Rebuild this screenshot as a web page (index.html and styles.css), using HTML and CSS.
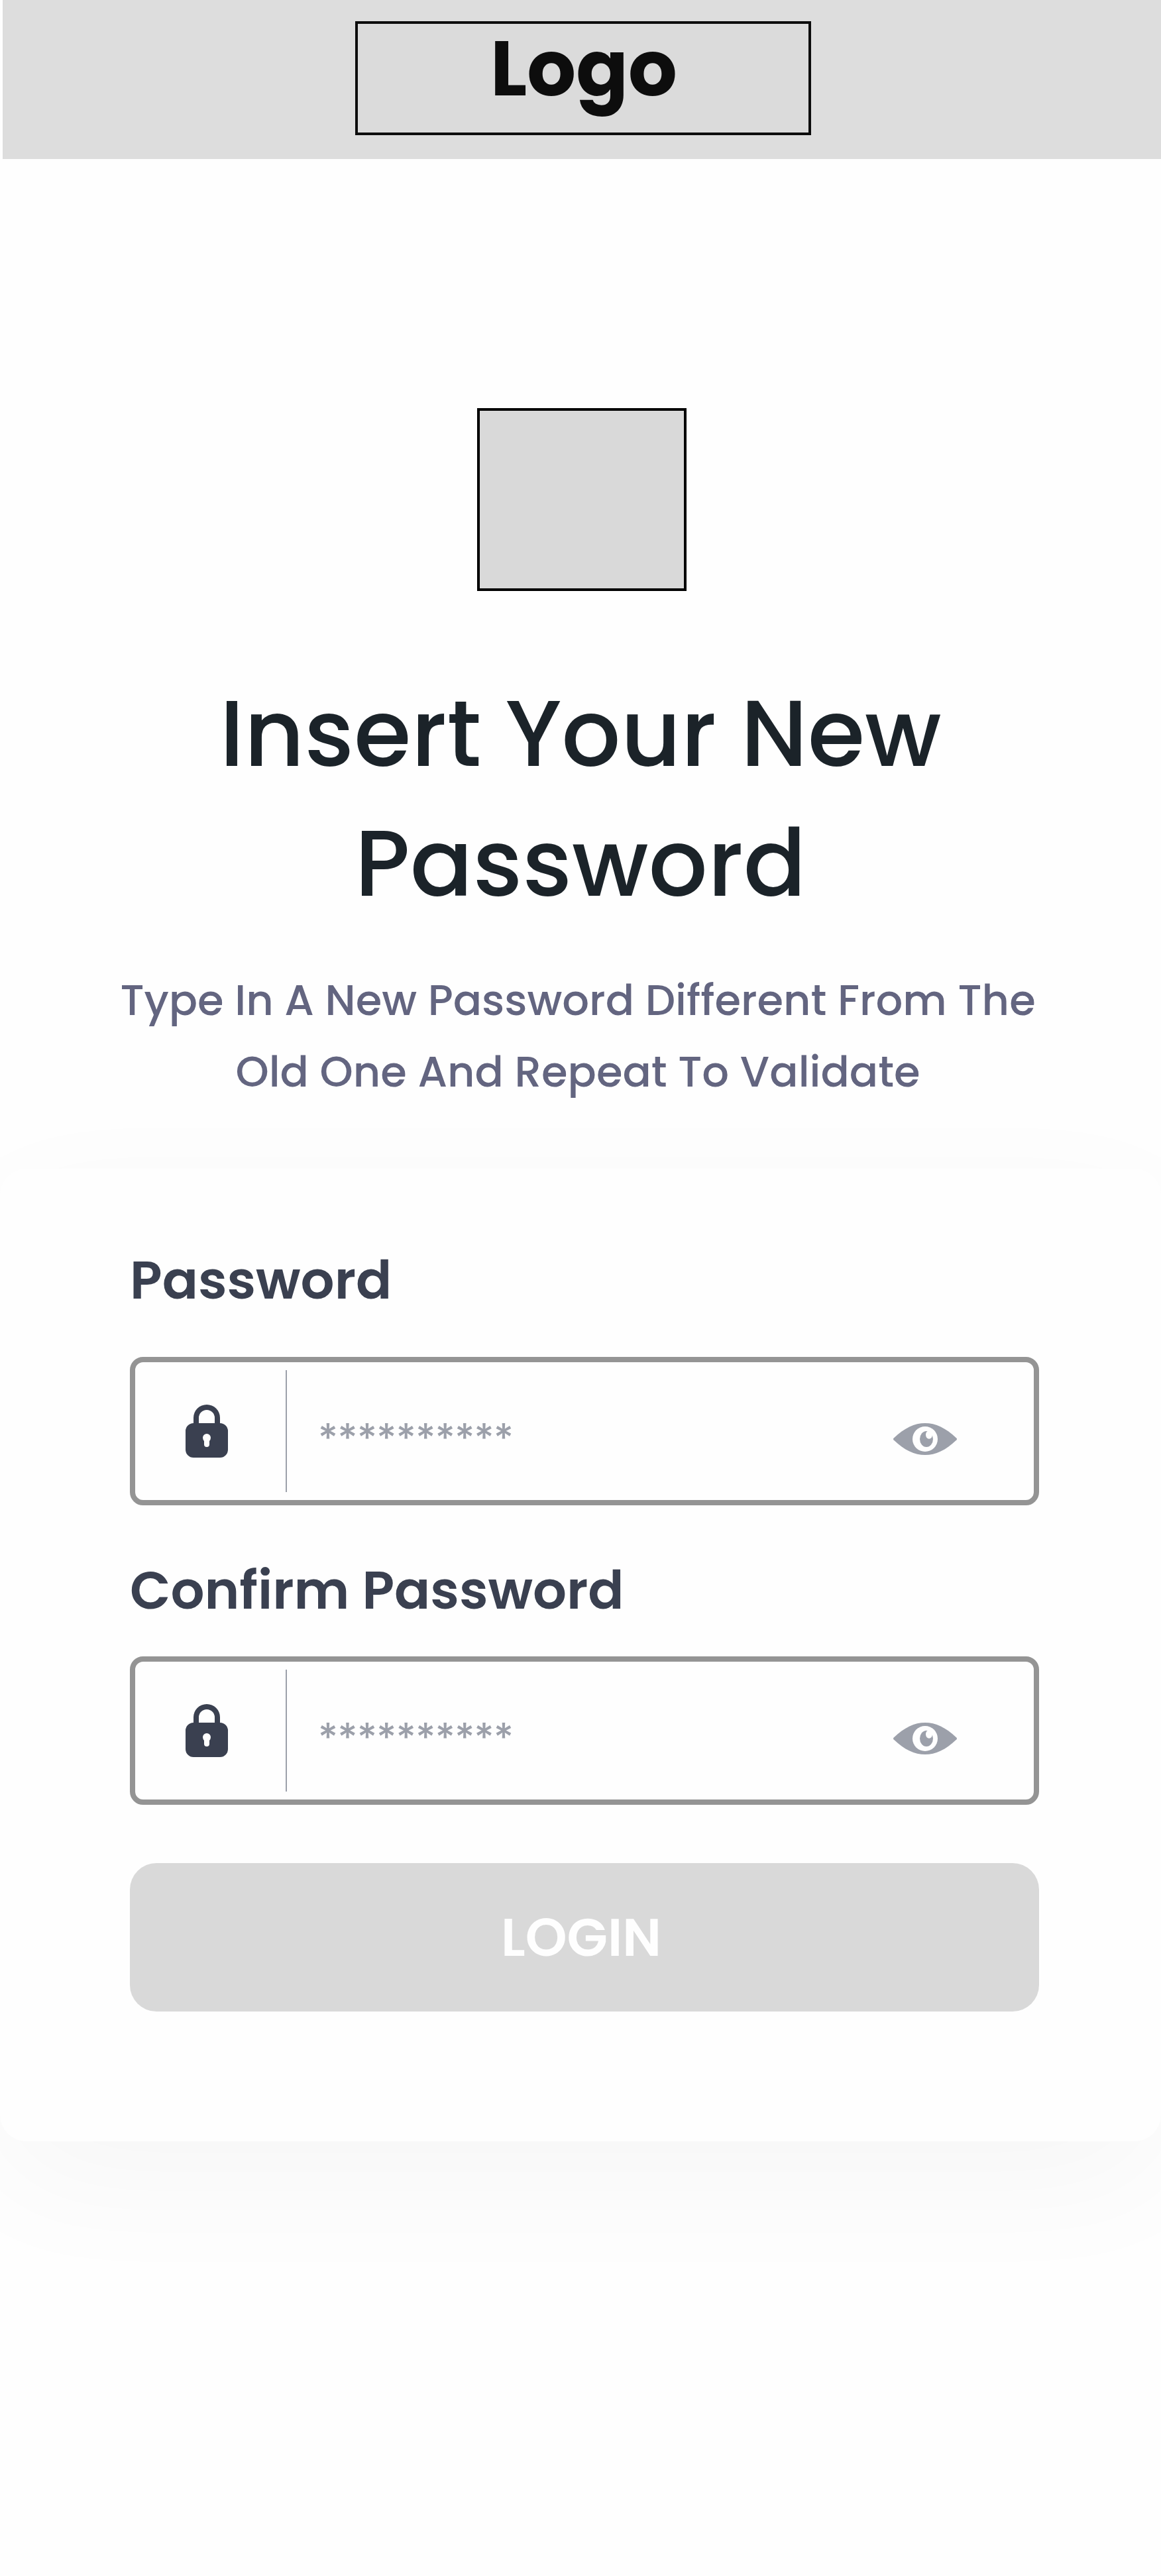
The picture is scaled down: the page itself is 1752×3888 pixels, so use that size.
FILE: index.html
```
<!DOCTYPE html>
<html lang="en">
<head>
<meta charset="utf-8">
<title>Insert Your New Password</title>
<link rel="stylesheet" href="styles.css">
</head>
<body>
<svg class="sprite" aria-hidden="true">
  <symbol id="lock" viewBox="0 0 64 80">
    <path fill-rule="evenodd" d="M12 28V20a20 20 0 0 1 40 0v8a12 12 0 0 1 12 12v28a12 12 0 0 1-12 12H12a12 12 0 0 1-12-12V40a12 12 0 0 1 12-12zm8 0h24v-8a12 12 0 0 0-24 0zm8 27v5a4 4 0 0 0 8 0v-5q2-2.500 2-5a6 6 0 0 0-12 0q0 2.500 2 5z"/>
  </symbol>
  <symbol id="eye" viewBox="0 0 96 48">
    <path d="M0.500 22.800C17 7 32 0 48 0S79 7 95.500 22.800Q96.500 24 95.500 25.200C79 41 64 48 48 48S17 41 0.500 25.200Q-0.500 24 0.500 22.800z"/>
    <circle class="eye-light" cx="48" cy="24" r="19"/>
    <ellipse cx="50" cy="24" rx="10" ry="12"/>
    <ellipse class="eye-light" cx="54" cy="17.500" rx="5" ry="6.200"/>
  </symbol>
</svg>
<header class="topbar">
  <div class="logo">Logo</div>
</header>
<main>
  <section class="intro">
    <div class="picture"></div>
    <h1 class="title">Insert Your New<br>Password</h1>
    <p class="subtitle">Type In A New Password Different From The<br>Old One And Repeat To Validate</p>
  </section>
  <form class="card">
    <div class="label">Password</div>
    <div class="field">
      <svg class="lock"><use href="#lock"/></svg>
      <span class="divider"></span>
      <span class="stars">**********</span>
      <svg class="eye"><use href="#eye"/></svg>
    </div>
    <div class="label label-confirm">Confirm Password</div>
    <div class="field">
      <svg class="lock"><use href="#lock"/></svg>
      <span class="divider"></span>
      <span class="stars">**********</span>
      <svg class="eye"><use href="#eye"/></svg>
    </div>
    <button class="submit" type="button">LOGIN</button>
  </form>
</main>
</body>
</html>
```
FILE: styles.css
```
* {
  box-sizing: border-box;
}

body {
  margin: 0;
  min-height: 3888px;
  background: #fefefe;
  font-family: Poppins, Inter, "Liberation Sans", sans-serif;
}

.sprite {
  display: none;
}

.topbar {
  display: flex;
  height: 240px;
  margin-left: 4px;
  padding: 32px 0 0 532px;
  background: #ddd;
}

.logo {
  width: 688px;
  height: 172px;
  padding-left: 200px;
  border: 4px solid #0d0d0d;
  background: #dbdbdb;
  color: #0d0d0d;
  font-size: 116px;
  font-weight: 700;
  line-height: 135px;
}

.intro {
  display: flex;
  flex-direction: column;
  padding-top: 376px;
}

.picture {
  width: 316px;
  height: 276px;
  margin-left: 720px;
  border: 4px solid #000;
  background: #d9d9d9;
}

.title {
  margin: 117px 0 0;
  color: #1b2329;
  font-size: 140px;
  font-weight: 500;
  line-height: 196px;
  text-align: center;
}

.subtitle {
  margin: 55px 0 0;
  padding-right: 8px;
  color: #636580;
  font-size: 64px;
  font-weight: 500;
  line-height: 108px;
  text-align: center;
}

.card {
  display: flex;
  flex-direction: column;
  margin-top: 92px;
  padding: 118px 184px 196px 196px;
  border-radius: 40px;
  background: #fefefe;
  box-shadow: 0 60px 204px rgba(0, 0, 0, 0.035);
}

.label {
  margin-bottom: 66px;
  color: #3a4050;
  font-size: 80px;
  font-weight: 600;
  line-height: 100px;
}

.label-confirm {
  margin: 78px 0 50px;
}

.field {
  display: flex;
  align-items: center;
  height: 224px;
  padding: 0 116px 0 76px;
  border: 8px solid #949494;
  border-radius: 20px;
}

.lock {
  width: 64px;
  height: 80px;
  fill: #3a4050;
}

.divider {
  width: 2px;
  height: 184px;
  margin-left: 87px;
  background: #9ca0aa;
}

.stars {
  margin-left: 47px;
  padding-top: 18px;
  color: #9ca0aa;
  font-family: Inter, "Liberation Sans", sans-serif;
  font-size: 57.5px;
  font-weight: 500;
  letter-spacing: -0.48px;
}

.eye {
  width: 96px;
  height: 48px;
  margin: 24px 0 0 auto;
  fill: #9ca0aa;
}

.eye-light {
  fill: #fefefe;
}

.submit {
  height: 224px;
  margin-top: 88px;
  padding: 0 0 0 560px;
  border: 0;
  border-radius: 40px;
  background: #d9d9d9;
  color: #fefefe;
  font-family: inherit;
  font-size: 80px;
  font-weight: 600;
  line-height: 224px;
  text-align: left;
}
```
